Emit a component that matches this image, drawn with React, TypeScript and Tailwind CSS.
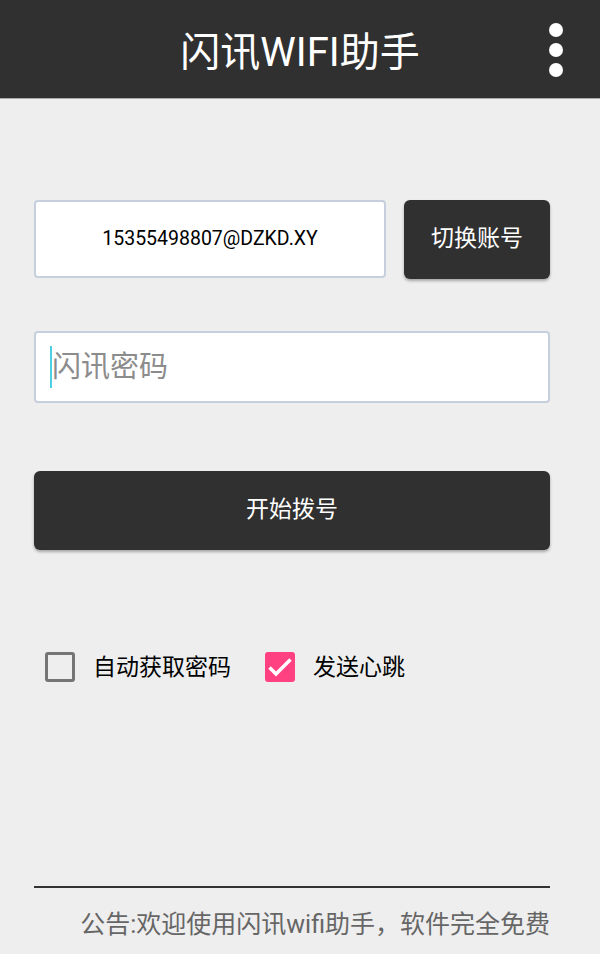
import { useState } from "react";

const font = { fontFamily: '"Roboto", "Noto Sans CJK SC", sans-serif' };

function CheckBox({ checked, label, onToggle }: { checked: boolean; label: string; onToggle: () => void }) {
  return (
    <button type="button" onClick={onToggle} className="flex items-center gap-[18px]">
      {checked ? (
        <span className="flex h-[30px] w-[30px] items-center justify-center rounded-[3px] bg-[#ff4081]">
          <svg viewBox="0 0 30 30" className="h-[30px] w-[30px]" fill="none" stroke="#ffffff" strokeWidth="3.5">
            <path d="M4.5 15.5l6.5 6.5L25.5 7.5" />
          </svg>
        </span>
      ) : (
        <span className="h-[30px] w-[30px] rounded-[3px] border-[3px] border-[#757575]" />
      )}
      <span className="text-[23px] leading-none text-black">{label}</span>
    </button>
  );
}

export default function App() {
  const [autoPwd, setAutoPwd] = useState(false);
  const [heartbeat, setHeartbeat] = useState(true);

  return (
    <div className="flex h-[954px] w-[600px] flex-col overflow-hidden bg-[#eeeeee]" style={font}>
      <header className="relative flex h-[99px] shrink-0 items-center justify-center border-b border-[#a8a8a8] bg-[#303030] pt-[7px]">
        <h1 className="text-[40px] leading-none text-white">闪讯WIFI助手</h1>
        <div className="absolute right-[37px] top-[23px] flex flex-col gap-[6px]">
          <span className="h-[14px] w-[14px] rounded-full bg-white" />
          <span className="h-[14px] w-[14px] rounded-full bg-white" />
          <span className="h-[14px] w-[14px] rounded-full bg-white" />
        </div>
      </header>

      <main className="flex flex-1 flex-col pl-[34px] pr-[50px]">
        <div className="mt-[101px] flex gap-[18px]">
          <div className="flex h-[78px] w-[352px] items-center justify-center rounded-[4px] border-2 border-[#c6cfdd] bg-white text-[19.5px] text-black">
            15355498807@DZKD.XY
          </div>
          <button className="h-[79px] w-[146px] rounded-[6px] bg-[#303030] text-[23px] text-white shadow-[0_2px_3px_rgba(0,0,0,0.3)]">
            切换账号
          </button>
        </div>

        <div className="mt-[52px] flex h-[72px] items-center rounded-[4px] border-2 border-[#c6cfdd] bg-white pl-[14px]">
          <span className="h-[42px] w-[2px] bg-[#4dd0e1]" />
          <span className="text-[29px] leading-none text-[#8c8c8c]">闪讯密码</span>
        </div>

        <button className="mt-[68px] h-[79px] rounded-[6px] bg-[#303030] text-[23px] text-white shadow-[0_2px_3px_rgba(0,0,0,0.3)]">
          开始拨号
        </button>

        <div className="ml-[11px] mt-[102px] flex items-center gap-[34px]">
          <CheckBox checked={autoPwd} label="自动获取密码" onToggle={() => setAutoPwd(!autoPwd)} />
          <CheckBox checked={heartbeat} label="发送心跳" onToggle={() => setHeartbeat(!heartbeat)} />
        </div>

        <div className="mt-[204px] h-[2px] bg-[#333333]" />
        <p className="mt-[24px] text-right text-[25px] leading-none text-[#666666]">
          公告:欢迎使用闪讯wifi助手，软件完全免费
        </p>
      </main>
    </div>
  );
}
